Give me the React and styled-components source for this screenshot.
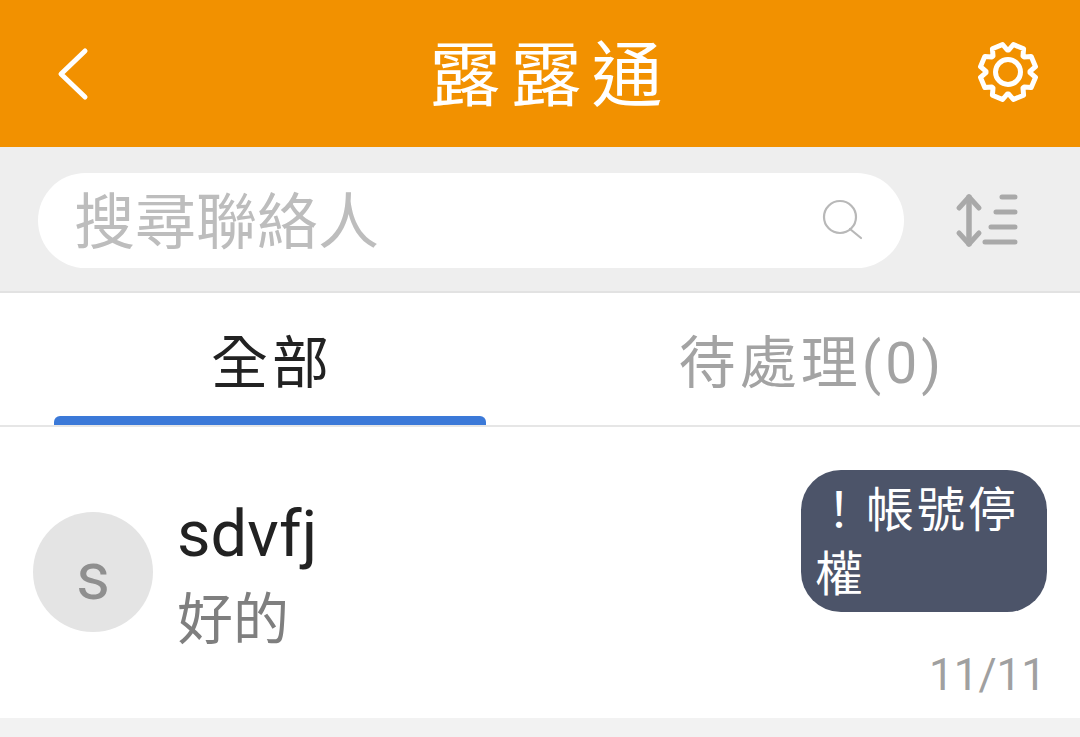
import React from 'react'
import styled, { createGlobalStyle } from 'styled-components'

const FONT = `Roboto, 'Noto Sans CJK TC', sans-serif`

// eight teeth, rotated so that two of them sit either side of the top
const gearPath = (cx, cy, outer, inner) => {
  const points = []
  for (let i = 0; i < 8; i++) {
    const mid = (i * 45 - 67.5) * (Math.PI / 180)
    const spread = [-0.36, -0.2, 0.2, 0.36]
    const radii = [inner, outer, outer, inner]
    spread.forEach((offset, j) => {
      const x = cx + radii[j] * Math.cos(mid + offset)
      const y = cy + radii[j] * Math.sin(mid + offset)
      points.push(`${x.toFixed(1)} ${y.toFixed(1)}`)
    })
  }
  return `M${points.join('L')}Z`
}

const App = () => (
  <Page>
    <GlobalStyle />
    <Header>
      <BackButton>
        <svg width='40' height='60' viewBox='0 0 40 60'>
          <path d='M30 7 L6 30 L30 53' fill='none' stroke='#fff' strokeWidth='5' strokeLinecap='round' strokeLinejoin='round' />
        </svg>
      </BackButton>
      <Title>露露通</Title>
      <SettingsButton>
        <svg width='66' height='66' viewBox='0 0 66 66'>
          <path d={gearPath(33, 33, 28, 22)} fill='none' stroke='#fff' strokeWidth='5' strokeLinejoin='round' />
          <circle cx='33' cy='33' r='12.5' fill='none' stroke='#fff' strokeWidth='5' />
        </svg>
      </SettingsButton>
    </Header>

    <SearchBar>
      <SearchPill>
        <Placeholder>搜尋聯絡人</Placeholder>
        <svg width='44' height='44' viewBox='0 0 44 44'>
          <circle cx='20' cy='19' r='16' fill='none' stroke='#b8b8b8' strokeWidth='2.2' />
          <path d='M30 31 L41 40' stroke='#b8b8b8' strokeWidth='2.2' strokeLinecap='round' />
        </svg>
      </SearchPill>
      <SortButton>
        <svg width='66' height='58' viewBox='0 0 66 58'>
          <g fill='none' stroke='#a9a9a9' strokeLinecap='round' strokeLinejoin='round'>
            <path d='M14 5 V52' strokeWidth='5.5' />
            <path d='M4 16 L14 5 L24 16 M4 41 L14 52 L24 41' strokeWidth='5' />
            <path d='M47 5 H60 M41 20 H60 M36 35 H60 M30 50 H60' strokeWidth='5' />
          </g>
        </svg>
      </SortButton>
    </SearchBar>

    <Tabs>
      <Tab $active>全部</Tab>
      <Tab>待處理(0)</Tab>
    </Tabs>

    <ContactRow>
      <Avatar>s</Avatar>
      <ContactText>
        <ContactName>sdvfj</ContactName>
        <LastMessage>好的</LastMessage>
      </ContactText>
      <ContactMeta>
        <StatusBadge>！帳號停權</StatusBadge>
        <ContactDate>11/11</ContactDate>
      </ContactMeta>
    </ContactRow>
  </Page>
)

const GlobalStyle = createGlobalStyle`
  html, body {
    margin: 0;
    background: #f2f2f2;
  }
`

const Page = styled.div`
  width: 1080px;
  height: 737px;
  overflow: hidden;
  font-family: ${FONT};
  background: #f2f2f2;
`

const Header = styled.header`
  height: 147px;
  padding: 0 39px 0 55px;
  box-sizing: border-box;
  display: flex;
  align-items: center;
  justify-content: space-between;
  background: #f29100;
`

const BackButton = styled.div`
  display: flex;
`

const SettingsButton = styled.div`
  display: flex;
  margin-bottom: 3px;
`

const Title = styled.h1`
  margin: 0 0 0 32px;
  padding-top: 3px;
  font-size: 71px;
  font-weight: 400;
  line-height: 1;
  letter-spacing: 10px;
  color: #fff;
`

const SearchBar = styled.div`
  height: 146px;
  padding: 26px 59px 24px 38px;
  box-sizing: border-box;
  display: flex;
  align-items: center;
  justify-content: space-between;
  background: #eeeeee;
  border-bottom: 2px solid #e2e2e2;
`

const SearchPill = styled.div`
  width: 866px;
  height: 95px;
  padding: 0 40px 0 36px;
  box-sizing: border-box;
  display: flex;
  align-items: center;
  justify-content: space-between;
  border-radius: 48px;
  background: #fff;
`

const Placeholder = styled.span`
  padding-top: 7px;
  font-size: 61px;
  line-height: 1;
  color: #bdbdbd;
`

const SortButton = styled.div`
  display: flex;
  margin-top: 2px;
`

const Tabs = styled.nav`
  height: 134px;
  box-sizing: border-box;
  display: flex;
  background: #fff;
  border-bottom: 2px solid #e6e6e6;
`

const Tab = styled.div`
  position: relative;
  flex: 1;
  display: flex;
  align-items: center;
  justify-content: center;
  padding: 0 0 2px 4px;
  font-size: 57px;
  letter-spacing: 4px;
  color: ${(props) => (props.$active ? '#222222' : '#a3a3a3')};

  &::after {
    content: '';
    display: ${(props) => (props.$active ? 'block' : 'none')};
    position: absolute;
    left: 54px;
    right: 54px;
    bottom: 0;
    height: 9px;
    border-radius: 6px 6px 0 0;
    background: #3b79d8;
  }
`

const ContactRow = styled.section`
  height: 291px;
  padding: 0 33px;
  box-sizing: border-box;
  display: flex;
  align-items: center;
  background: #fff;
`

const Avatar = styled.div`
  width: 120px;
  height: 120px;
  flex-shrink: 0;
  margin-bottom: 2px;
  display: flex;
  align-items: center;
  justify-content: center;
  padding-top: 10px;
  box-sizing: border-box;
  border-radius: 50%;
  font-size: 66px;
  color: #8f8f8f;
  background: #e4e4e4;
`

const ContactText = styled.div`
  margin-left: 24px;
  padding-top: 18px;
  flex: 1;
`

const ContactName = styled.div`
  margin-top: -2px;
  font-size: 65px;
  line-height: 78px;
  color: #222222;
`

const LastMessage = styled.div`
  font-size: 56px;
  line-height: 94px;
  color: #7f7f7f;
`

const ContactMeta = styled.div`
  align-self: flex-start;
  padding-top: 43px;
  display: flex;
  flex-direction: column;
  align-items: flex-end;
`

const StatusBadge = styled.div`
  width: 246px;
  height: 142px;
  padding: 9px 14px;
  box-sizing: border-box;
  border-radius: 40px;
  font-size: 48px;
  line-height: 64px;
  letter-spacing: 3px;
  color: #fff;
  background: #4c5469;
`

const ContactDate = styled.div`
  margin-top: 37px;
  padding-right: 1px;
  font-size: 44px;
  line-height: 52px;
  color: #a0a0a0;
`

export default App
